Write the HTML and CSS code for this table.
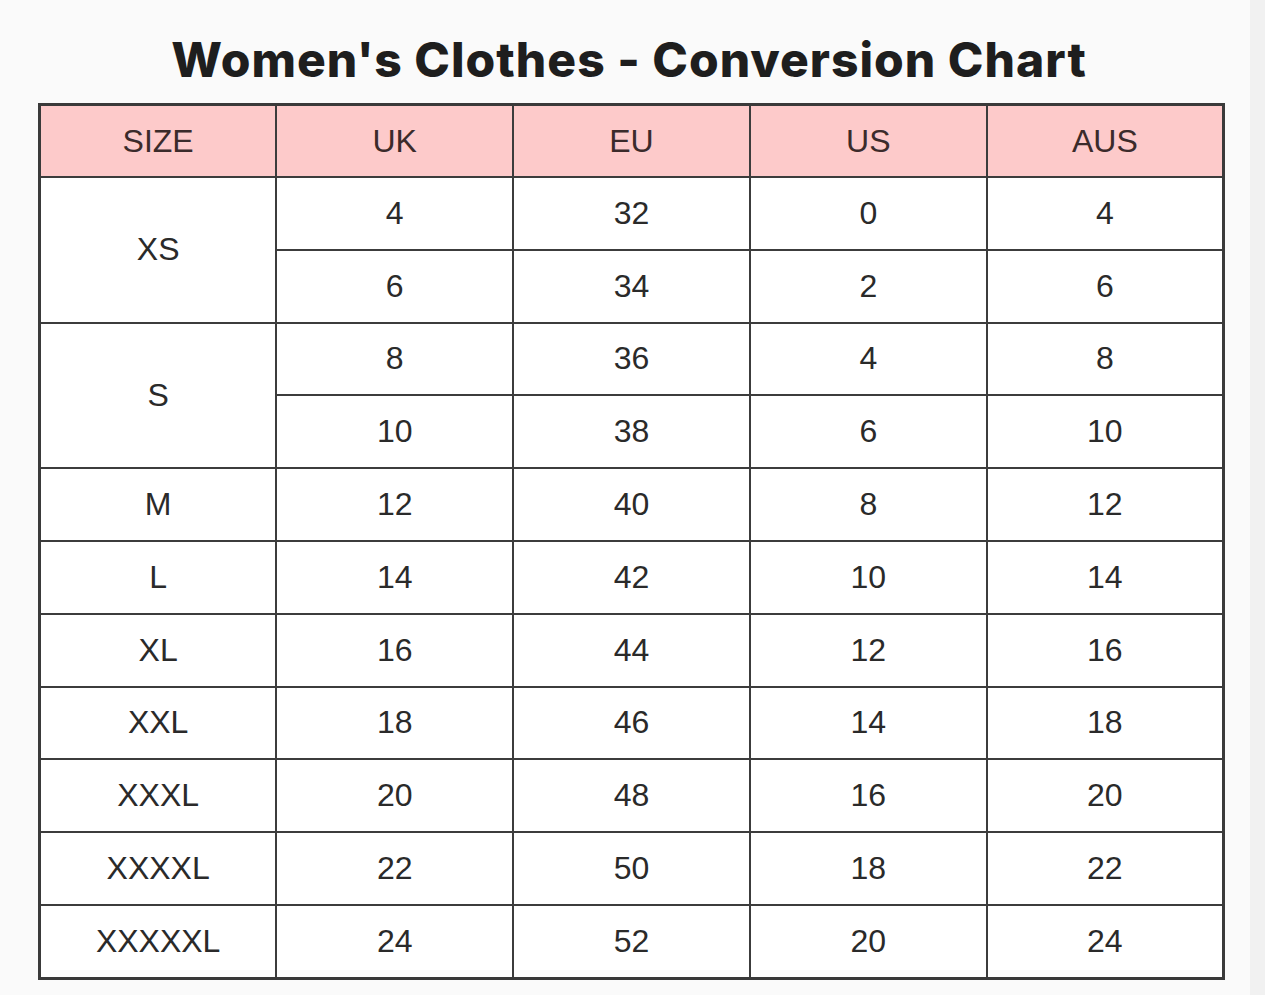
FILE: index.html
```html
<!DOCTYPE html>
<html>
<head>
<meta charset="utf-8">
<link rel="stylesheet" href="styles.css">
</head>
<body>
<div class="page">
  <h1 class="title">Women's Clothes - Conversion Chart</h1>
  <table class="chart">
    <thead>
      <tr><th>SIZE</th><th>UK</th><th>EU</th><th>US</th><th>AUS</th></tr>
    </thead>
    <tbody>
      <tr><td rowspan="2">XS</td><td>4</td><td>32</td><td>0</td><td>4</td></tr>
      <tr><td>6</td><td>34</td><td>2</td><td>6</td></tr>
      <tr><td rowspan="2">S</td><td>8</td><td>36</td><td>4</td><td>8</td></tr>
      <tr><td>10</td><td>38</td><td>6</td><td>10</td></tr>
      <tr><td>M</td><td>12</td><td>40</td><td>8</td><td>12</td></tr>
      <tr><td>L</td><td>14</td><td>42</td><td>10</td><td>14</td></tr>
      <tr><td>XL</td><td>16</td><td>44</td><td>12</td><td>16</td></tr>
      <tr><td>XXL</td><td>18</td><td>46</td><td>14</td><td>18</td></tr>
      <tr><td>XXXL</td><td>20</td><td>48</td><td>16</td><td>20</td></tr>
      <tr><td>XXXXL</td><td>22</td><td>50</td><td>18</td><td>22</td></tr>
      <tr><td>XXXXXL</td><td>24</td><td>52</td><td>20</td><td>24</td></tr>
    </tbody>
  </table>
</div>
</body>
</html>
```
FILE: styles.css
```css
html, body {
  margin: 0;
  padding: 0;
}
body {
  background: #f1f1f1;
  width: 1265px;
  height: 995px;
  overflow: hidden;
}
.page {
  width: 1250px;
  height: 995px;
  background: #fafafa;
  padding-top: 30px;
  box-sizing: border-box;
}
.title {
  margin: 0;
  height: 73px;
  font-family: "Inter", "Liberation Sans", sans-serif;
  font-weight: 800;
  font-size: 48px;
  line-height: 60px;
  color: #1e1e1e;
  text-align: center;
  padding-left: 8px;
  letter-spacing: 1px;
}
.chart {
  margin-left: 38px;
  width: 1187px;
  border-collapse: collapse;
  table-layout: fixed;
  background: #fff;
  border: 3px solid #3a3a3a;
  font-family: "Liberation Sans", Arial, sans-serif;
  font-size: 32px;
  color: #2a2a2a;
}
.chart th, .chart td {
  border: 2px solid #3c3c3c;
  text-align: center;
  vertical-align: middle;
  padding: 0;
  font-weight: normal;
}
.chart th {
  background: #fdcaca;
  color: #3b2b2b;
  height: 70px;
}
.chart td {
  height: 70.8px;
}
```
